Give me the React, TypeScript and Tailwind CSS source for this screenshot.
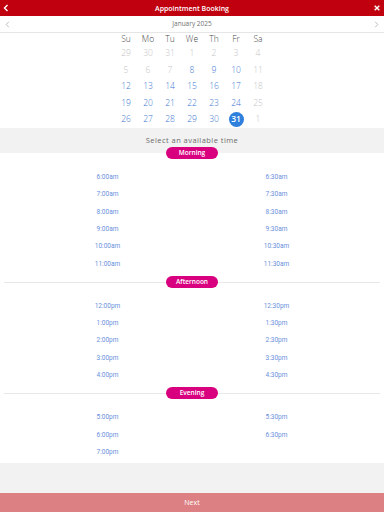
import React from "react";

const days = ["Su", "Mo", "Tu", "We", "Th", "Fr", "Sa"];

type Cell = { d: number; on: boolean; sel?: boolean };

const weeks: Cell[][] = [
  [29, 30, 31, 1, 2, 3, 4].map((d) => ({ d, on: false })),
  [5, 6, 7, 8, 9, 10, 11].map((d) => ({ d, on: d >= 8 && d <= 10 })),
  [12, 13, 14, 15, 16, 17, 18].map((d) => ({ d, on: d !== 18 })),
  [19, 20, 21, 22, 23, 24, 25].map((d) => ({ d, on: d !== 25 })),
  [26, 27, 28, 29, 30, 31, 1].map((d, i) => ({ d, on: i < 6, sel: d === 31 })),
];

const groups = [
  {
    name: "Morning",
    slots: ["6:00am", "6:30am", "7:00am", "7:30am", "8:00am", "8:30am", "9:00am", "9:30am", "10:00am", "10:30am", "11:00am", "11:30am"],
  },
  {
    name: "Afternoon",
    slots: ["12:00pm", "12:30pm", "1:00pm", "1:30pm", "2:00pm", "2:30pm", "3:00pm", "3:30pm", "4:00pm", "4:30pm"],
  },
  { name: "Evening", slots: ["5:00pm", "5:30pm", "6:00pm", "6:30pm", "7:00pm"] },
];

function Pill({ label }: { label: string }) {
  return (
    <div className="flex h-3 w-[52px] items-center justify-center rounded-full bg-[#d8007f] text-[6.5px] font-semibold leading-none text-white">
      {label}
    </div>
  );
}

function Slots({ slots }: { slots: string[] }) {
  return (
    <div className="grid grid-cols-2 px-[23px] pt-[10px]">
      {slots.map((s) => (
        <div
          key={s}
          className="flex h-[17.4px] items-center justify-center text-[6.5px] text-[#6a90dc] [font-family:Roboto,sans-serif]"
        >
          {s}
        </div>
      ))}
    </div>
  );
}

export default function App() {
  return (
    <div className="flex h-[512px] w-[384px] flex-col bg-white [font-family:'Open_Sans',sans-serif]">
      <div className="relative flex h-4 shrink-0 items-center justify-center bg-[#c0000f]">
        <svg className="absolute left-[3px] top-[4px]" width="6" height="8" viewBox="0 0 6 8">
          <polyline points="4.5,1 1.5,4 4.5,7" fill="none" stroke="white" strokeWidth="1.4" />
        </svg>
        <span className="text-[7px] font-semibold leading-none text-white">Appointment Booking</span>
        <svg className="absolute right-[4px] top-[5px]" width="6" height="6" viewBox="0 0 6 6">
          <path d="M0.7 0.7L5.3 5.3M5.3 0.7L0.7 5.3" stroke="white" strokeWidth="1.4" />
        </svg>
      </div>

      <div className="relative flex h-[17px] shrink-0 items-center justify-center border-b border-[#e6e6e6]">
        <svg className="absolute left-[5px] top-[5px]" width="5" height="7" viewBox="0 0 5 7">
          <polyline points="3.8,0.8 1.2,3.5 3.8,6.2" fill="none" stroke="#b5b5b5" strokeWidth="0.9" />
        </svg>
        <span className="text-[6.5px] leading-none text-[#707070]">January 2025</span>
        <svg className="absolute right-[5px] top-[5px]" width="5" height="7" viewBox="0 0 5 7">
          <polyline points="1.2,0.8 3.8,3.5 1.2,6.2" fill="none" stroke="#b5b5b5" strokeWidth="0.9" />
        </svg>
      </div>

      <div className="mx-auto grid h-[95px] w-[154px] shrink-0 grid-cols-7 grid-rows-[12px_repeat(5,16.6px)]">
        {days.map((d) => (
          <div key={d} className="flex items-center justify-center text-[8.5px] font-light leading-none text-[#4a4a4a]">
            {d}
          </div>
        ))}
        {weeks.flat().map((c, i) => (
          <div key={i} className="flex items-center justify-center">
            {c.sel ? (
              <div className="flex h-[15px] w-[15px] items-center justify-center rounded-full bg-[#2f7fdc] text-[8.5px] font-semibold leading-none text-white">
                {c.d}
              </div>
            ) : (
              <span className={`text-[8.5px] font-light leading-none ${c.on ? "text-[#3f78d2]" : "text-[#c4c4c4]"}`}>{c.d}</span>
            )}
          </div>
        ))}
      </div>

      <div className="flex h-[25px] shrink-0 items-start justify-center bg-[#f2f2f2] pt-[9px]">
        <span className="text-[7.5px] leading-none tracking-[0.06em] text-[#6b6b6b]">Select an available time</span>
      </div>

      <div className="-mt-[6px] flex justify-center">
        <Pill label={groups[0].name} />
      </div>
      <Slots slots={groups[0].slots} />

      {groups.slice(1).map((g) => (
        <div key={g.name}>
          <div className="relative mt-[2.5px] flex h-3 items-center justify-center">
            <div className="absolute left-1 right-1 top-1/2 h-px bg-[#e8e8e8]" />
            <div className="relative">
              <Pill label={g.name} />
            </div>
          </div>
          <Slots slots={g.slots} />
        </div>
      ))}

      <div className="mt-[2px] flex-1 bg-[#f2f2f2]" />
      <div className="flex h-[19px] shrink-0 items-center justify-center bg-[#dd8084]">
        <span className="text-[7px] leading-none text-white">Next</span>
      </div>
    </div>
  );
}
